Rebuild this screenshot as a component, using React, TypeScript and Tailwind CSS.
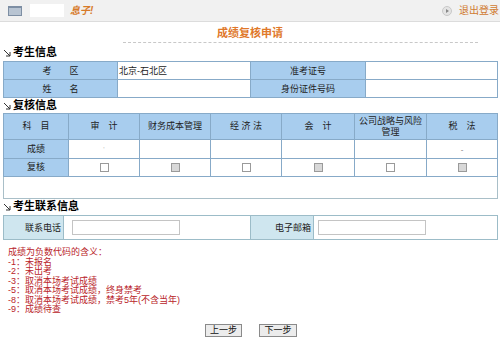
import React from "react";

const font = { fontFamily: '"Liberation Sans", "Noto Sans CJK SC", sans-serif' };

function Arrow() {
  return (
    <svg width="9" height="9" viewBox="0 0 9 9" className="mr-[1px] mt-[2px]">
      <path d="M1 1 L7 7 M7 3 L7 7 L3 7" stroke="#333" strokeWidth="1" fill="none" />
    </svg>
  );
}

function SectionTitle({ children }: { children: React.ReactNode }) {
  return (
    <div className="flex items-center h-[14px] pl-[3px] text-[11px] font-bold text-black leading-none">
      <Arrow />
      <span>{children}</span>
    </div>
  );
}

function Check({ gray }: { gray?: boolean }) {
  return (
    <span
      className={`inline-block align-middle w-[9px] h-[9px] border border-[#9a9a9a] ${gray ? "bg-[#d8d8d8]" : "bg-white"}`}
    />
  );
}

const td = "border border-[#87aac8] p-0";
const th = "bg-[#a8cdee] border border-[#87aac8] text-center p-0";

export default function App() {
  const subjects = ["审　计", "财务成本管理", "经 济 法", "会　计", "公司战略与风险管理", "税　法"];
  const grays = [false, true, false, true, false, true];
  return (
    <div className="w-[500px] h-[341px] bg-white overflow-hidden" style={font}>
      {/* top bar */}
      <div className="h-[22px] bg-[#f1f1f1] border-b border-[#dcdcdc] flex items-center px-[8px]">
        <div className="w-[14px] h-[10px] bg-[#b8c4d2] border border-[#7d8ea3] border-t-2 mt-[1px]" />
        <div className="w-[34px] h-[13px] bg-white ml-[8px]" />
        <span className="ml-[6px] text-[10px] font-bold italic text-[#d77a2a]">息子!</span>
        <div className="flex-1" />
        <svg width="10" height="10" viewBox="0 0 10 10">
          <circle cx="5" cy="5" r="4.5" fill="#e4e4e4" stroke="#c8c8c8" />
          <path d="M4 3 L7 5 L4 7 Z" fill="#888" />
        </svg>
        <span className="ml-[7px] mr-[-7px] text-[10px] text-[#d07a30]">退出登录</span>
      </div>

      {/* title */}
      <div className="flex flex-col items-center">
        <div className="mt-[4px] text-[11px] font-bold text-[#e0782a] leading-[14px]">成绩复核申请</div>
        <div className="mt-[2px] w-[355px] ml-[100px] border-t border-dashed border-[#c8c8c8]" />
      </div>

      <div className="mt-[2px]">
        <SectionTitle>考生信息</SectionTitle>
      </div>
      <div className="px-[3px] mt-[2px]">
        <table className="w-[494px] table-fixed border-collapse text-[9px] leading-[12px] text-[#222]">
          <colgroup>
            <col className="w-[114px]" />
            <col className="w-[133px]" />
            <col className="w-[115px]" />
            <col className="w-[132px]" />
          </colgroup>
          <tbody>
            <tr className="h-[18px]">
              <td className={th}>考　　区</td>
              <td className={`${td} pl-[1px]`}>北京-石北区</td>
              <td className={th}>准考证号</td>
              <td className={td}></td>
            </tr>
            <tr className="h-[18px]">
              <td className={th}>姓　　名</td>
              <td className={td}></td>
              <td className={th}>身份证件号码</td>
              <td className={td}></td>
            </tr>
          </tbody>
        </table>
      </div>

      <div>
        <SectionTitle>复核信息</SectionTitle>
      </div>
      <div className="px-[3px] mt-[1px]">
        <table className="w-[494px] table-fixed border-collapse text-[9px] leading-[11px] text-[#222]">
          <colgroup>
            <col className="w-[65px]" />
            <col className="w-[71px]" />
            <col className="w-[71px]" />
            <col className="w-[71px]" />
            <col className="w-[73px]" />
            <col className="w-[72px]" />
            <col className="w-[71px]" />
          </colgroup>
          <tbody>
            <tr className="h-[26px]">
              <td className={th}>科　目</td>
              {subjects.map((s) => (
                <td key={s} className={`${th} px-[2px]`}>
                  {s}
                </td>
              ))}
            </tr>
            <tr className="h-[19px]">
              <td className={th}>成绩</td>
              <td className={`${td} text-center text-[#bbb] text-[7px]`}>'</td>
              <td className={td}></td>
              <td className={td}></td>
              <td className={td}></td>
              <td className={td}></td>
              <td className={`${td} text-center text-[#777] text-[8px]`}>-</td>
            </tr>
            <tr className="h-[18px]">
              <td className={th}>复核</td>
              {grays.map((g, i) => (
                <td key={i} className={`${td} text-center leading-none`}>
                  <Check gray={g} />
                </td>
              ))}
            </tr>
            <tr className="h-[22px]">
              <td colSpan={7} className="border border-[#a9bfc8] p-0"></td>
            </tr>
          </tbody>
        </table>
      </div>

      <div>
        <SectionTitle>考生联系信息</SectionTitle>
      </div>
      <div className="px-[3px] mt-[2px]">
        <table className="w-[494px] table-fixed border-collapse text-[9px] leading-[12px] text-[#222]">
          <colgroup>
            <col className="w-[60px]" />
            <col className="w-[187px]" />
            <col className="w-[63px]" />
            <col className="w-[184px]" />
          </colgroup>
          <tbody>
            <tr className="h-[24px]">
              <td className="bg-[#cfe6ef] border border-[#9cbcc8] text-right pr-[2px] p-0">联系电话</td>
              <td className="border border-[#9cbcc8] pl-[4px] p-0">
                <div className="w-[108px] h-[15px] border border-[#c4c4c4] bg-white ml-[4px]" />
              </td>
              <td className="bg-[#cfe6ef] border border-[#9cbcc8] text-right pr-[2px] p-0">电子邮箱</td>
              <td className="border border-[#9cbcc8] p-0">
                <div className="w-[108px] h-[15px] border border-[#c4c4c4] bg-white ml-[4px]" />
              </td>
            </tr>
          </tbody>
        </table>
      </div>

      <div className="mt-[8px] pl-[8px] text-[9px] leading-[9.5px] text-[#b9242a]">
        <div>成绩为负数代码的含义：</div>
        <div>-1：未报名</div>
        <div>-2：未出考</div>
        <div>-3：取消本场考试成绩</div>
        <div>-5：取消本场考试成绩，终身禁考</div>
        <div>-8：取消本场考试成绩，禁考5年(不含当年)</div>
        <div>-9：成绩待查</div>
      </div>

      <div className="mt-[9px] flex justify-center gap-[17px] pl-[2px]">
        <button className="w-[37px] h-[13px] border border-[#8a8a8a] bg-[#ececec] text-[9px] leading-none text-[#111]">
          上一步
        </button>
        <button className="w-[38px] h-[13px] border border-[#8a8a8a] bg-[#ececec] text-[9px] leading-none text-[#111]">
          下一步
        </button>
      </div>
    </div>
  );
}
